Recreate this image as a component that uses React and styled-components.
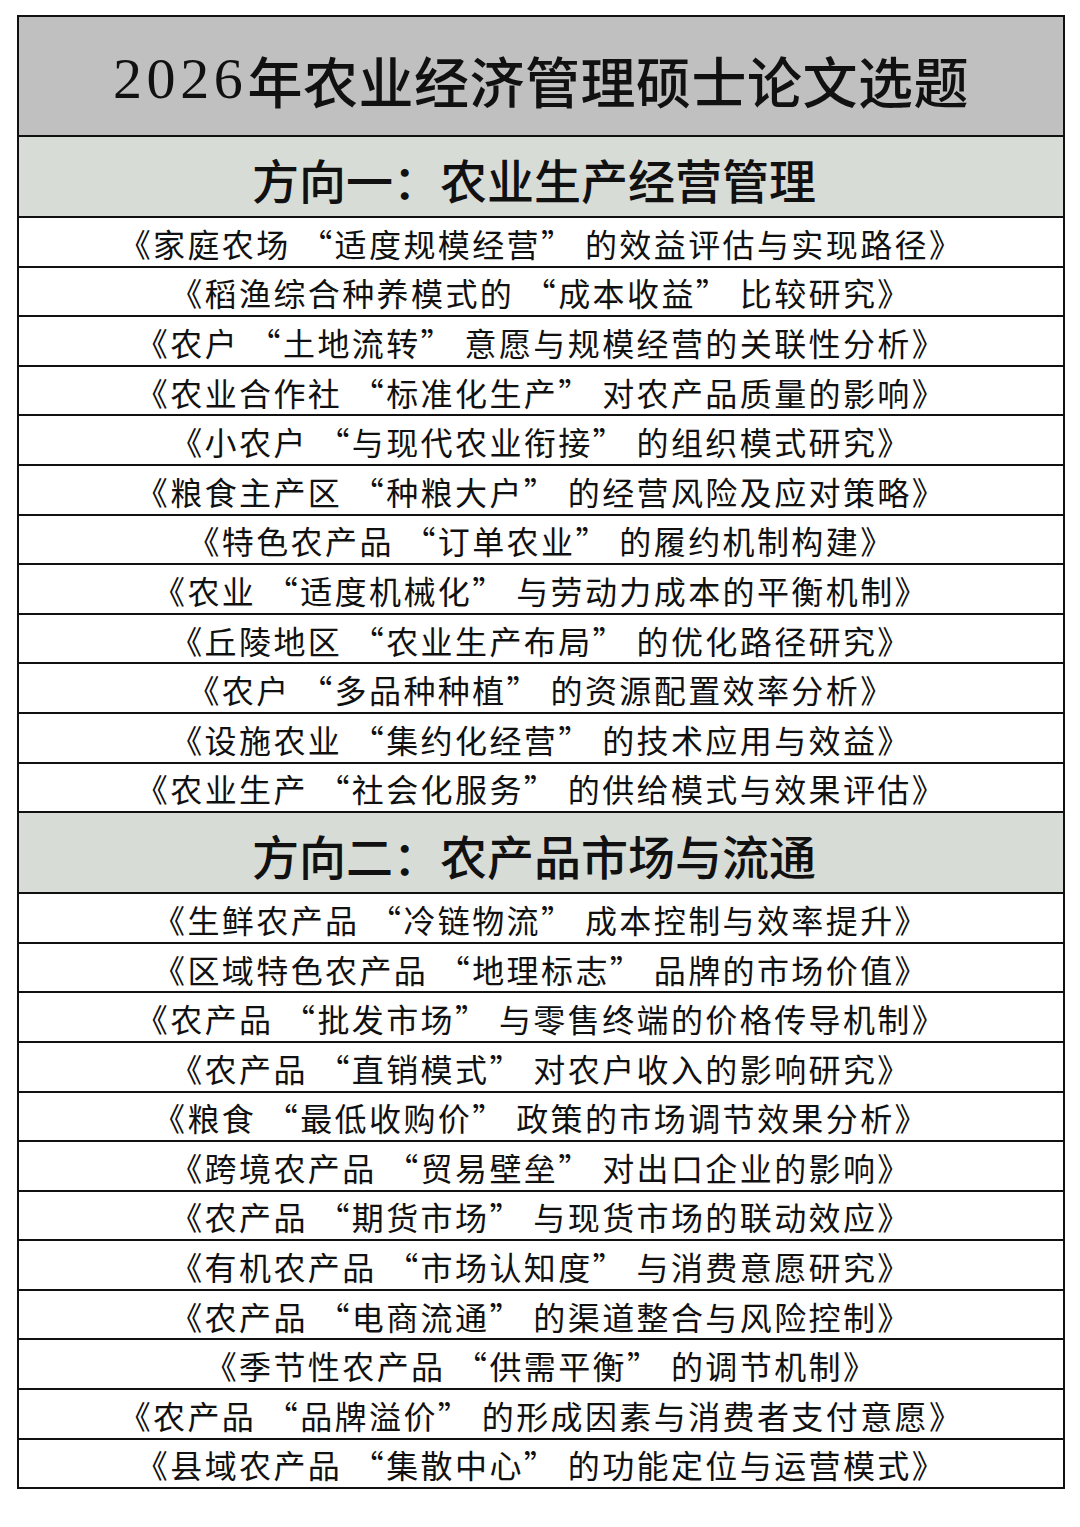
import React from "react";
import styled, { createGlobalStyle } from "styled-components";

const GlobalStyle = createGlobalStyle`
  html, body {
    margin: 0;
    padding: 0;
    background: #ffffff;
  }
  body {
    font-family: "Noto Sans CJK SC", "Noto Sans", sans-serif;
    color: #111111;
  }
`;

const Page = styled.div`
  width: 1080px;
  height: 1527px;
  padding: 15px 0 0 17px;
  box-sizing: border-box;
`;

const Table = styled.div`
  width: 1048px;
  border: 2px solid #111111;
  box-sizing: border-box;
  display: flex;
  flex-direction: column;
`;

const TitleRow = styled.div`
  height: 120px;
  background: #c0c0c0;
  border-bottom: 2px solid #111111;
  display: flex;
  align-items: center;
  justify-content: center;
  font-size: 55px;
  font-weight: 500;
  letter-spacing: 0.5px;
  padding-top: 5px;
  box-sizing: border-box;
`;

const Digits = styled.span`
  font-family: "Liberation Serif", serif;
  font-size: 58px;
  letter-spacing: 0.08em;
  font-weight: 400;
`;

const SectionRow = styled.div`
  height: 81px;
  background: #d8dcd7;
  border-bottom: 2px solid #111111;
  box-sizing: border-box;
  display: flex;
  align-items: center;
  justify-content: center;
  font-size: 47px;
  font-weight: 500;
  padding: 4px 14px 0 0;
`;

const TopicRow = styled.div`
  height: ${(p) => (p.$last ? "47.6px" : "49.6px")};
  border-bottom: ${(p) => (p.$last ? "none" : "2px solid #111111")};
  display: flex;
  align-items: center;
  justify-content: center;
  font-size: 32px;
  letter-spacing: 2.4px;
  line-height: 1;
  white-space: pre;
  padding-top: 2px;
  box-sizing: border-box;
`;

const sections = [
  {
    title: "方向一：农业生产经营管理",
    topics: [
      "《家庭农场 “适度规模经营” 的效益评估与实现路径》",
      "《稻渔综合种养模式的 “成本收益” 比较研究》",
      "《农户 “土地流转” 意愿与规模经营的关联性分析》",
      "《农业合作社 “标准化生产” 对农产品质量的影响》",
      "《小农户 “与现代农业衔接” 的组织模式研究》",
      "《粮食主产区 “种粮大户” 的经营风险及应对策略》",
      "《特色农产品 “订单农业” 的履约机制构建》",
      "《农业 “适度机械化” 与劳动力成本的平衡机制》",
      "《丘陵地区 “农业生产布局” 的优化路径研究》",
      "《农户 “多品种种植” 的资源配置效率分析》",
      "《设施农业 “集约化经营” 的技术应用与效益》",
      "《农业生产 “社会化服务” 的供给模式与效果评估》",
    ],
  },
  {
    title: "方向二：农产品市场与流通",
    topics: [
      "《生鲜农产品 “冷链物流” 成本控制与效率提升》",
      "《区域特色农产品 “地理标志” 品牌的市场价值》",
      "《农产品 “批发市场” 与零售终端的价格传导机制》",
      "《农产品 “直销模式” 对农户收入的影响研究》",
      "《粮食 “最低收购价” 政策的市场调节效果分析》",
      "《跨境农产品 “贸易壁垒” 对出口企业的影响》",
      "《农产品 “期货市场” 与现货市场的联动效应》",
      "《有机农产品 “市场认知度” 与消费意愿研究》",
      "《农产品 “电商流通” 的渠道整合与风险控制》",
      "《季节性农产品 “供需平衡” 的调节机制》",
      "《农产品 “品牌溢价” 的形成因素与消费者支付意愿》",
      "《县域农产品 “集散中心” 的功能定位与运营模式》",
    ],
  },
];

export default function App() {
  return (
    <Page>
      <GlobalStyle />
      <Table>
        <TitleRow>
          <Digits>2026</Digits>年农业经济管理硕士论文选题
        </TitleRow>
        {sections.map((s, si) => (
          <React.Fragment key={s.title}>
            <SectionRow>{s.title}</SectionRow>
            {s.topics.map((t, ti) => (
              <TopicRow
                key={t}
                $last={si === sections.length - 1 && ti === s.topics.length - 1}
              >
                {t}
              </TopicRow>
            ))}
          </React.Fragment>
        ))}
      </Table>
    </Page>
  );
}
